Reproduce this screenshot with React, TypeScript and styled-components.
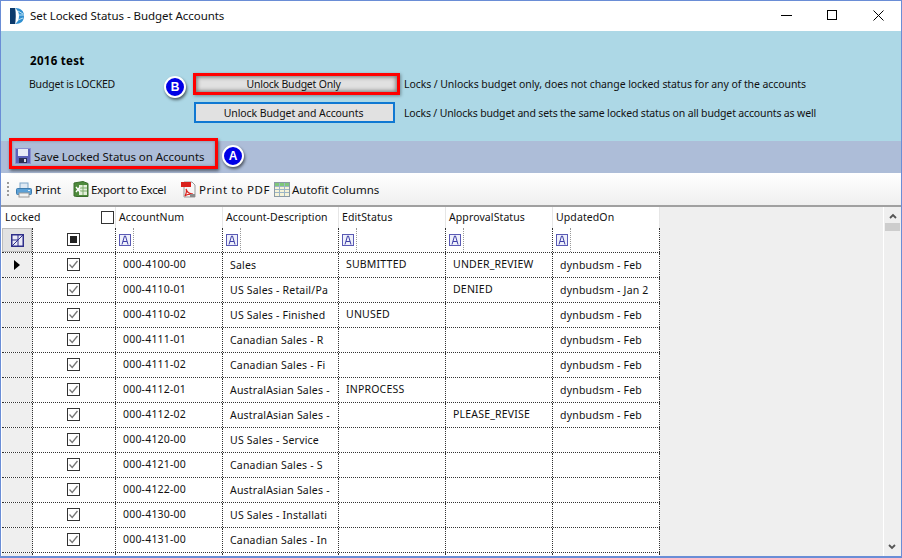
import React from "react";
import styled, { createGlobalStyle } from "styled-components";

const Global = createGlobalStyle`
  html, body { margin: 0; padding: 0; background: #fff; }
  body { font-family: "Noto Sans", "DejaVu Sans", sans-serif; font-size: 11px; color: #111; }
  * { box-sizing: border-box; }
`;

const Window = styled.div`
  width: 902px; height: 558px; overflow: hidden; display: flex; flex-direction: column;
  border: 1px solid #6a8dd6; border-bottom-width: 2px; background: #fff;
`;
const TitleBar = styled.div`
  height: 30px; flex: none; display: flex; align-items: center; padding-left: 8px; background: #fff;
`;
const TitleText = styled.div`
  margin-left: 4px; font-size: 11.5px; letter-spacing: -0.05px; color: #111; flex: 1; margin-top: -1px;
`;
const WinButtons = styled.div`
  display: flex; height: 100%; align-items: center; margin-top: -1px;
`;
const WinButton = styled.div`
  width: 46px; height: 30px; display: flex; align-items: center; justify-content: center; svg { display: block; }
`;

const Panel = styled.div`
  height: 110px; flex: none; background: #add8e6; padding: 23px 0 0 29px;
`;
const BudgetName = styled.div`
  font-weight: 700; font-size: 11.5px; line-height: 14px; letter-spacing: 0.3px; color: #000; margin-bottom: 1px;
`;
const UnlockRow = styled.div`
  display: flex; align-items: center; height: 29px;
`;
const LockLabel = styled.div`
  width: 134px; font-size: 10.5px; margin: 1px 0 0 -1px; letter-spacing: -0.2px; flex: none;
`;
const BadgeSlot = styled.div`
  width: 30px; display: flex; padding-left: 1px; flex: none;
`;
const Badge = styled.div`
  width: 22px; height: 22px; border-radius: 50%; background: #0000e6; border: 2px solid #fff;
  box-shadow: 1px 2px 3px rgba(0,0,0,.55); color: #fff; font-weight: 700; font-size: 12px;
  display: flex; align-items: center; justify-content: center; flex: none; font-family: "Liberation Sans", sans-serif;
`;
const RowBadge = styled(Badge)`
  margin-top: 7px;
`;
const ActionButton = styled.button<{ $marked?: boolean }>`
  font: inherit; font-size: 10.5px; letter-spacing: ${(p) => (p.$marked ? -0.22 : -0.08)}px; color: #111; flex: none; background: #e1e1e1;
  padding: 0 ${(p) => (p.$marked ? 6 : 2)}px 0 0;
  width: ${(p) => (p.$marked ? 207 : 201)}px; height: ${(p) => (p.$marked ? 22 : 21)}px;
  margin-left: ${(p) => (p.$marked ? 0 : 1)}px;
  border: ${(p) => (p.$marked ? 3 : 2)}px solid ${(p) => (p.$marked ? "#f00" : "#0f78d2")};
  box-shadow: ${(p) => (p.$marked ? "inset 0 0 4px 1px rgba(0,0,0,.5), 1px 1px 3px rgba(0,0,0,.35)" : "none")};
`;
const ActionNote = styled.div<{ $marked?: boolean }>`
  margin-left: ${(p) => (p.$marked ? 4 : 9)}px; font-size: 10.5px; letter-spacing: ${(p) => (p.$marked ? -0.08 : -0.15)}px;
`;

const SaveBar = styled.div`
  height: 32px; flex: none; background: #adbdd8; display: flex; align-items: flex-start; padding-left: 8px;
`;
const SaveButton = styled.div`
  width: 209px; height: 31px; margin-top: -3px; display: flex; align-items: center; padding: 5px 0 0 3px; gap: 3px;
  border: 3px solid #f00; background: #adbdd8; box-shadow: 1px 2px 3px rgba(0,0,0,.5), inset 0 0 3px rgba(0,0,0,.3);
  font-size: 11.5px; letter-spacing: -0.06px; position: relative;
`;
const SaveBadge = styled(Badge)`
  margin: 4px 0 0 4px;
`;

const Toolbar = styled.div`
  height: 34px; flex: none; display: flex; align-items: center; padding: 1px 0 0 6px;
  background: linear-gradient(#ffffff, #efefef); border-bottom: 2px solid #a0a0a0; font-size: 11.5px;
`;
const Grip = styled.div`
  width: 2px; height: 16px; margin-right: 7px;
  background: repeating-linear-gradient(#9a9a9a 0 2px, transparent 2px 4px);
`;
const ToolItem = styled.div<{ $width: number; $spacing: number; $gap: number }>`
  display: flex; align-items: center; gap: ${(p) => p.$gap}px; width: ${(p) => p.$width}px; flex: none;
  letter-spacing: ${(p) => p.$spacing}px; color: #111; white-space: nowrap; svg { flex: none; }
`;

const GridArea = styled.div`
  flex: 1; min-height: 0; display: flex; overflow: hidden; background: #fff; padding-left: 1px;
`;
const Sheet = styled.div`
  width: 658px; flex: none; overflow: hidden;
`;
const columns = "31px 83px 107px 116px 107px 107px 107px";
const HeaderRow = styled.div`
  height: 21px; display: grid; grid-template-columns: 114px 107px 116px 107px 107px 107px;
`;
const HeaderCell = styled.div`
  display: flex; align-items: center; padding-left: 3px; border-right: 1px solid #e6e6e6;
  letter-spacing: 0.1px; font-size: 10.5px; position: relative; padding-bottom: 2px;
`;
const Row = styled.div`
  height: 25px; display: grid; grid-template-columns: ${columns};
  border-bottom: 1px dotted #333;
`;
const Cell = styled.div<{ $low?: boolean }>`
  border-right: 1px dotted #333; padding: 0 0 ${(p) => (p.$low ? 0 : 2)}px 7px;
  display: flex; align-items: center; white-space: nowrap; overflow: hidden; font-size: 10.5px; letter-spacing: 0.2px;
`;
const RowHead = styled.div`
  background: #efefef; border-right: 1px dotted #333; display: flex; align-items: center; justify-content: center;
`;
const CornerButton = styled.div`
  width: 100%; height: 100%; background: #e2e2e2; border: 1px solid #bdbdbd; display: flex; align-items: center; justify-content: center;
`;
const CheckCell = styled.div`
  border-right: 1px dotted #333; display: flex; align-items: center; justify-content: center; padding: 0 1px 1px 0;
`;
const FilterCell = styled.div`
  border-right: 1px dotted #333; padding-left: 3px; display: flex; align-items: center;
`;
const FilterSep = styled.div`
  width: 1px; height: 100%; margin-left: 2px; border-left: 1px dotted #999;
`;
const Box = styled.div`
  width: 13px; height: 13px; border: 1px solid #333; background: #fff; display: flex; align-items: center; justify-content: center; flex: none;
`;
const HeadBox = styled(Box)`
  position: absolute; right: 1px; top: 4px;
`;
const Solid = styled.div`
  width: 7px; height: 7px; background: #222;
`;
const Filler = styled.div`
  flex: 1; background: #efefef;
`;
const Scrollbar = styled.div`
  width: 17px; flex: none; margin-left: 1px; background: #efefef; display: flex; flex-direction: column; align-items: center; padding-top: 6px;
`;
const Thumb = styled.div`
  width: 15px; height: 8px; background: #cdcdcd; margin: 4px 1px 0 0;
`;
const ScrollSpace = styled.div`
  flex: 1;
`;
const ScrollEnd = styled.div`
  height: 12px; display: flex; align-items: flex-start; margin-right: 1px;
`;

const Logo = () => (
  <svg width="17" height="16" viewBox="0 0 17 16">
    <path d="M1 0h5c1 3 1 12 0 16H1z" fill="#0c3a6b" />
    <path d="M6 0c6 0 9 3 9 8s-3 8-9 8c3-2 4-5 4-8S9 2 6 0z" fill="#2f8fd0" />
    <path d="M9 3l5 3M10 7h5M9 12l5-2" stroke="#bfe2f5" strokeWidth="1" />
  </svg>
);
const Floppy = () => (
  <svg width="16" height="16" viewBox="0 0 16 16">
    <rect x="0.5" y="0.5" width="15" height="15" fill="#5b62b8" stroke="#8a90d0" />
    <rect x="3" y="1" width="10" height="7" fill="#e8ecf6" />
    <rect x="4" y="10" width="8" height="5" fill="#2b2f55" />
    <rect x="9" y="11" width="2" height="3" fill="#d9dcec" />
  </svg>
);
const PrintIcon = () => (
  <svg width="16" height="16" viewBox="0 0 16 16">
    <rect x="4" y="1" width="8" height="6" fill="#dfe9f3" stroke="#7fa6c8" />
    <rect x="0.5" y="6.5" width="15" height="6" rx="1" fill="#5ba0d6" stroke="#3d7bad" />
    <rect x="3" y="11" width="10" height="4" fill="#f2f2f2" stroke="#9a9a9a" />
    <rect x="12" y="8" width="2" height="1" fill="#e2eef8" />
  </svg>
);
const ExcelIcon = () => (
  <svg width="16" height="17" viewBox="0 0 16 17">
    <path d="M1 2l9-1.500 5 2v13H4L1 15z" fill="#4e8a3c" stroke="#3a6e2c" />
    <rect x="6" y="4" width="8" height="10" fill="#e4f0dc" />
    <path d="M6 7h8M6 10h8M10 4v10" stroke="#7cab6a" />
    <path d="M3 6l4 5M7 6l-4 5" stroke="#fff" strokeWidth="1.400" />
  </svg>
);
const PdfIcon = () => (
  <svg width="16" height="17" viewBox="0 0 16 17">
    <path d="M3 1h8l3 3v12H3z" fill="#f7f7f7" stroke="#9a9a9a" />
    <rect x="0" y="1" width="10" height="5" fill="#d9211d" />
    <path d="M5 8c1 3 3 5 7 5-3 0-6 0-8 2 1-2 2-5 1-7z" fill="none" stroke="#d9211d" strokeWidth="1.200" />
    <rect x="9" y="13" width="5" height="3" fill="#8a8a8a" />
  </svg>
);
const TableIcon = () => (
  <svg width="16" height="15" viewBox="0 0 16 15">
    <rect x="0.5" y="0.5" width="15" height="14" fill="#f6f3d8" stroke="#8a9aa6" />
    <rect x="1" y="1" width="14" height="3" fill="#7fc77a" />
    <path d="M1 4.500h14M1 7.500h14M1 10.500h14M5.500 1v13M10.500 1v13" stroke="#9cb5c6" />
  </svg>
);
const FilterA = () => (
  <svg width="12" height="12" viewBox="0 0 12 12">
    <rect x="0.5" y="0.5" width="11" height="11" fill="#eef0fb" stroke="#5a5ab4" />
    <path d="M3 10.500L5.500 2h1L9 10.500M4 7.500h4" fill="none" stroke="#3f3fa8" />
  </svg>
);
const CornerIcon = () => (
  <svg width="13" height="13" viewBox="0 0 13 13">
    <rect x="0.750" y="0.750" width="11.500" height="11.500" fill="#eaeaf7" stroke="#2f2f8a" strokeWidth="1.500" />
    <path d="M1 12L12 1M1 6h6M7 1v11" stroke="#2f2f8a" />
  </svg>
);
const Check = () => (
  <svg width="11" height="11" viewBox="0 0 11 11">
    <path d="M1.500 5.500L4.200 8.500L9.500 2" fill="none" stroke="#777" strokeWidth="1.300" />
  </svg>
);
const Chevron = ({ down }: { down?: boolean }) => (
  <svg width="8" height="6" viewBox="0 0 8 6">
    <path d={down ? "M1 1l3 3 3-3" : "M1 5l3-3 3 3"} fill="none" stroke="#555" strokeWidth="1.800" />
  </svg>
);

const rows: [string, string, string, string, string][] = [
  ["000-4100-00", "Sales", "SUBMITTED", "UNDER_REVIEW", "dynbudsm - Feb"],
  ["000-4110-01", "US Sales - Retail/Pa", "", "DENIED", "dynbudsm - Jan 2"],
  ["000-4110-02", "US Sales - Finished", "UNUSED", "", "dynbudsm - Feb"],
  ["000-4111-01", "Canadian Sales - R", "", "", "dynbudsm - Feb"],
  ["000-4111-02", "Canadian Sales - Fi", "", "", "dynbudsm - Feb"],
  ["000-4112-01", "AustralAsian Sales -", "INPROCESS", "", "dynbudsm - Feb"],
  ["000-4112-02", "AustralAsian Sales -", "", "PLEASE_REVISE", "dynbudsm - Feb"],
  ["000-4120-00", "US Sales - Service", "", "", ""],
  ["000-4121-00", "Canadian Sales - S", "", "", ""],
  ["000-4122-00", "AustralAsian Sales -", "", "", ""],
  ["000-4130-00", "US Sales - Installati", "", "", ""],
  ["000-4131-00", "Canadian Sales - In", "", "", ""],
  ["", "", "", "", ""],
];

export default function App() {
  return (
    <Window>
      <Global />
      <TitleBar>
        <Logo />
        <TitleText>Set Locked Status - Budget Accounts</TitleText>
        <WinButtons>
          <WinButton>
            <svg width="11" height="11" viewBox="0 0 11 11"><path d="M0 5.500h11" stroke="#000" /></svg>
          </WinButton>
          <WinButton>
            <svg width="11" height="11" viewBox="0 0 11 11"><rect x="0.500" y="0.500" width="9" height="9" fill="none" stroke="#000" /></svg>
          </WinButton>
          <WinButton>
            <svg width="11" height="11" viewBox="0 0 11 11"><path d="M0.500 0.500l10 10M10.500 0.500l-10 10" stroke="#000" /></svg>
          </WinButton>
        </WinButtons>
      </TitleBar>
      <Panel>
        <BudgetName>2016 test</BudgetName>
        <UnlockRow>
          <LockLabel>Budget is LOCKED</LockLabel>
          <BadgeSlot><RowBadge>B</RowBadge></BadgeSlot>
          <ActionButton $marked>Unlock Budget Only</ActionButton>
          <ActionNote $marked>Locks / Unlocks budget only, does not change locked status for any of the accounts</ActionNote>
        </UnlockRow>
        <UnlockRow>
          <LockLabel />
          <BadgeSlot />
          <ActionButton>Unlock Budget and Accounts</ActionButton>
          <ActionNote>Locks / Unlocks budget and sets the same locked status on all budget accounts as well</ActionNote>
        </UnlockRow>
      </Panel>
      <SaveBar>
        <SaveButton><Floppy />Save Locked Status on Accounts</SaveButton>
        <SaveBadge>A</SaveBadge>
      </SaveBar>
      <Toolbar>
        <Grip />
        <ToolItem $width={57} $spacing={0} $gap={3}><PrintIcon />Print</ToolItem>
        <ToolItem $width={108} $spacing={-0.3} $gap={2}><ExcelIcon />Export to Excel</ToolItem>
        <ToolItem $width={93} $spacing={0.55} $gap={2}><PdfIcon />Print to PDF</ToolItem>
        <ToolItem $width={120} $spacing={0} $gap={2}><TableIcon />Autofit Columns</ToolItem>
      </Toolbar>
      <GridArea>
        <Sheet>
          <HeaderRow>
            <HeaderCell>Locked<HeadBox /></HeaderCell>
            <HeaderCell>AccountNum</HeaderCell>
            <HeaderCell>Account-Description</HeaderCell>
            <HeaderCell>EditStatus</HeaderCell>
            <HeaderCell>ApprovalStatus</HeaderCell>
            <HeaderCell>UpdatedOn</HeaderCell>
          </HeaderRow>
          <Row>
            <RowHead><CornerButton><CornerIcon /></CornerButton></RowHead>
            <CheckCell><Box><Solid /></Box></CheckCell>
            {[0, 1, 2, 3, 4].map((i) => (
              <FilterCell key={i}><FilterA /><FilterSep /></FilterCell>
            ))}
          </Row>
          {rows.map((r, i) => (
            <Row key={i}>
              <RowHead>
                {i === 0 && (
                  <svg width="6" height="10" viewBox="0 0 6 10"><path d="M0 0l6 5-6 5z" fill="#000" /></svg>
                )}
              </RowHead>
              <CheckCell>{r[0] && <Box><Check /></Box>}</CheckCell>
              <Cell>{r[0]}</Cell>
              <Cell $low>{r[1]}</Cell>
              <Cell>{r[2]}</Cell>
              <Cell>{r[3]}</Cell>
              <Cell $low>{r[4]}</Cell>
            </Row>
          ))}
        </Sheet>
        <Filler />
        <Scrollbar>
          <Chevron />
          <Thumb />
          <ScrollSpace />
          <ScrollEnd><Chevron down /></ScrollEnd>
        </Scrollbar>
      </GridArea>
    </Window>
  );
}
